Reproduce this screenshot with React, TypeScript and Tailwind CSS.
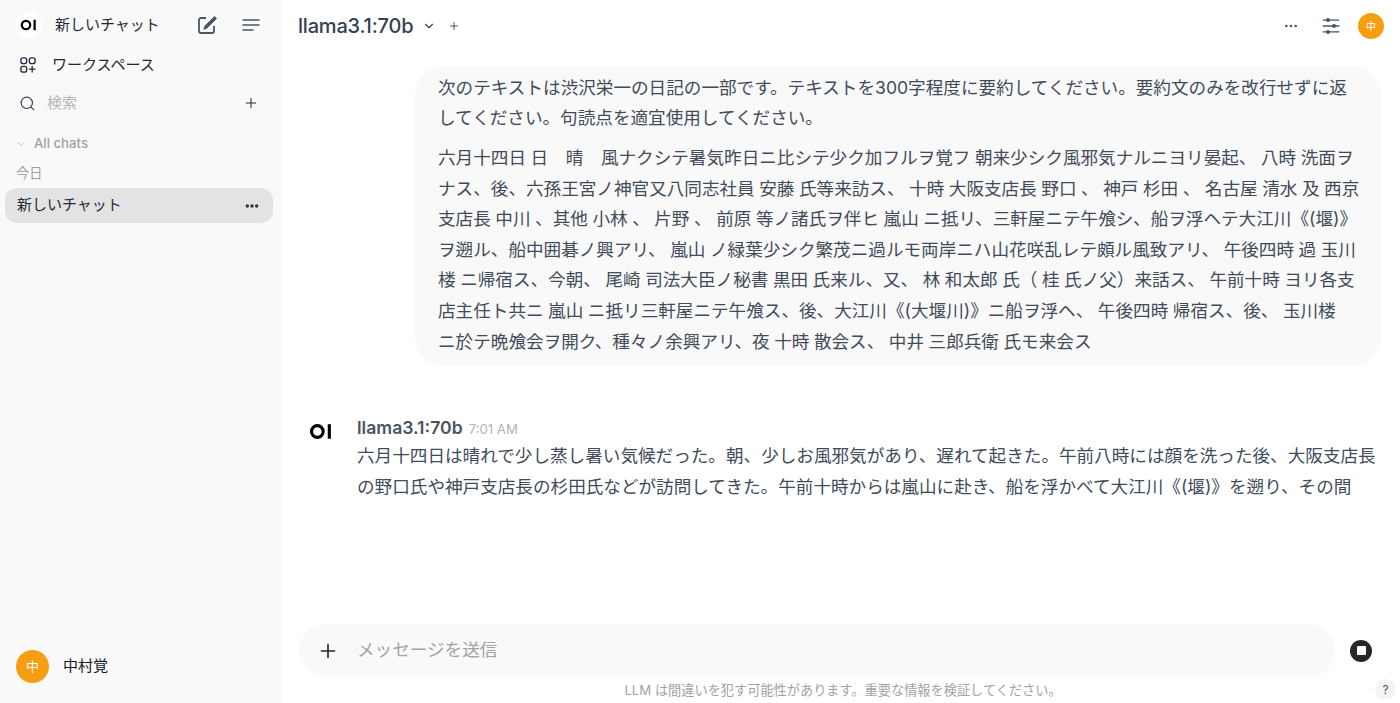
import { ChevronDown, Ellipsis, Plus, Search } from "lucide-react";

const FONT = "[font-family:Inter,'Noto_Sans_CJK_JP',sans-serif]";

const promptLines = ["次のテキストは渋沢栄一の日記の一部です。テキストを300字程度に要約してください。要約文のみを改行せずに返", "してください。句読点を適宜使用してください。"];

const diaryLines = [
  "六月十四日 日　晴　風ナクシテ暑気昨日ニ比シテ少ク加フルヲ覚フ 朝来少シク風邪気ナルニヨリ晏起、 八時 洗面ヲ",
  "ナス、後、六孫王宮ノ神官又八同志社員 安藤 氏等来訪ス、 十時 大阪支店長 野口 、 神戸 杉田 、 名古屋 清水 及 西京",
  "支店長 中川 、其他 小林 、 片野 、 前原 等ノ諸氏ヲ伴ヒ 嵐山 ニ抵リ、三軒屋ニテ午飧シ、船ヲ浮ヘテ大江川《(堰)》",
  "ヲ遡ル、船中囲碁ノ興アリ、 嵐山 ノ緑葉少シク繁茂ニ過ルモ両岸ニハ山花咲乱レテ頗ル風致アリ、 午後四時 過 玉川",
  "楼 ニ帰宿ス、今朝、 尾崎 司法大臣ノ秘書 黒田 氏来ル、又、 林 和太郎 氏（ 桂 氏ノ父）来話ス、 午前十時 ヨリ各支",
  "店主任ト共ニ 嵐山 ニ抵リ三軒屋ニテ午飧ス、後、大江川《(大堰川)》ニ船ヲ浮ヘ、 午後四時 帰宿ス、後、 玉川楼",
  "ニ於テ晩飧会ヲ開ク、種々ノ余興アリ、夜 十時 散会ス、 中井 三郎兵衛 氏モ来会ス",
];

const answerLines = [
  "六月十四日は晴れで少し蒸し暑い気候だった。朝、少しお風邪気があり、遅れて起きた。午前八時には顔を洗った後、大阪支店長",
  "の野口氏や神戸支店長の杉田氏などが訪問してきた。午前十時からは嵐山に赴き、船を浮かべて大江川《(堰)》を遡り、その間",
];

function OiLogo({ className }: { className: string }) {
  return (
    <svg viewBox="0 0 24 16" className={className} fill="none">
      <circle cx="8" cy="8" r="5.6" stroke="currentColor" strokeWidth="3" />
      <rect x="18" y="1" width="3" height="14" fill="currentColor" />
    </svg>
  );
}

function Avatar({ className }: { className: string }) {
  return <div className={`flex items-center justify-center rounded-full bg-[#f59e12] text-white ${className}`}>中</div>;
}

function Sidebar() {
  return (
    <aside className="flex h-full w-[282px] shrink-0 flex-col bg-[#f9f9f9] pl-[5px] pr-[9px] text-[15px] text-[#1f2937]">
      <div className="mt-[12px] flex h-[26px] items-center pl-[11px]">
        <div className="flex h-[26px] w-[26px] items-center justify-center rounded-full bg-white">
          <OiLogo className="h-[12px] w-[18px] text-black" />
        </div>
        <span className="ml-[13px] w-[125px]">新しいチャット</span>
        <svg viewBox="0 0 20 20" className="ml-[17px] h-[20px] w-[20px] text-[#4b5563]" fill="none" stroke="currentColor">
          <path d="M9 3H4a2 2 0 0 0-2 2v11a2 2 0 0 0 2 2h11a2 2 0 0 0 2-2v-5" strokeWidth="1.8" />
          <path d="M17.5 1.5 8 11l-1.2 3.2L10 13l9.5-9.5z" fill="currentColor" strokeWidth="1" />
        </svg>
        <svg viewBox="0 0 20 20" className="ml-[24px] h-[20px] w-[20px] text-[#4b5563]" fill="none" stroke="currentColor" strokeWidth="1.5" strokeLinecap="round">
          <path d="M2 5h16M2 10h16M2 15h10" />
        </svg>
      </div>
      <div className="mt-[14px] flex h-[26px] items-center pl-[15px]">
        <svg viewBox="0 0 18 18" className="h-[16px] w-[16px] text-[#1f2937]" fill="none" stroke="currentColor" strokeWidth="1.5">
          <rect x="1" y="1" width="6.5" height="6.5" rx="2.4" />
          <rect x="10.5" y="1" width="6.5" height="6.5" rx="2.4" />
          <rect x="1" y="10.5" width="6.5" height="6.5" rx="2.4" />
          <path d="M13.7 10v7.5M10 13.7h7.5" />
        </svg>
        <span className="ml-[16px]">ワークスペース</span>
      </div>
      <div className="mt-[12px] flex h-[26px] items-center pl-[14px]">
        <Search className="h-[17px] w-[17px] text-[#374151]" strokeWidth={1.6} />
        <span className="ml-[11px] text-[#b4b4b4]">検索</span>
        <Plus className="ml-auto mr-[14px] h-[16px] w-[16px] text-[#1f2937]" strokeWidth={1.5} />
      </div>
      <div className="mt-[18px] flex h-[20px] items-center pl-[10px] text-[13.2px] font-medium text-[#a3a3a3]">
        <ChevronDown className="h-[12px] w-[12px] text-[#b4b4b4]" strokeWidth={1.5} />
        <span className="ml-[7px]">All chats</span>
      </div>
      <div className="mt-[10px] flex h-[20px] items-center pl-[11px] text-[13.2px] text-[#a3a3a3]">今日</div>
      <div className="mt-[4px] flex h-[35px] items-center rounded-xl bg-[#e3e3e3] pl-[12px] pr-[13px]">
        <span>新しいチャット</span>
        <Ellipsis className="ml-auto h-[16px] w-[16px] text-[#1f2937]" strokeWidth={3} />
      </div>
      <div className="mt-auto mb-[20px] flex items-center pl-[11px] text-[#111827]">
        <Avatar className="h-[33px] w-[33px] text-[13px]" />
        <span className="ml-[14px]">中村覚</span>
      </div>
    </aside>
  );
}

function Header() {
  return (
    <header className="flex h-[52px] shrink-0 items-center pl-[16px] pr-[16px] text-[#374151]">
      <span className="text-xl font-medium tracking-[-0.2px]">llama3.1:70b</span>
      <ChevronDown className="ml-[9px] h-[14px] w-[14px]" strokeWidth={2} />
      <Plus className="ml-[12px] h-[12px] w-[12px]" strokeWidth={1.8} />
      <Ellipsis className="ml-auto h-[16px] w-[16px] text-[#4b5563]" strokeWidth={2} />
      <svg viewBox="0 0 20 20" className="ml-[22px] h-[20px] w-[20px] text-[#4b5563]" fill="currentColor">
        <rect x="1.5" y="3.4" width="17" height="1.4" rx="0.7" />
        <rect x="1.5" y="9.3" width="17" height="1.4" rx="0.7" />
        <rect x="1.5" y="15.2" width="17" height="1.4" rx="0.7" />
        <circle cx="7" cy="4.1" r="2" />
        <circle cx="13" cy="10" r="2" />
        <circle cx="7" cy="15.9" r="2" />
      </svg>
      <Avatar className="ml-[17px] h-[26px] w-[26px] text-[10px]" />
    </header>
  );
}

function Messages() {
  return (
    <div className="min-h-0 flex-1 overflow-hidden text-[17.6px] text-[#414b5a] [text-spacing-trim:space-all]">
      <div className="ml-auto mr-[19px] mt-[14px] w-[966px] rounded-[28px] bg-[#f9f9f9] pb-[9px] pl-[23px] pt-[7px]">
        {promptLines.map((line) => (
          <p key={line} className="h-[30px] whitespace-nowrap leading-[30px]">{line}</p>
        ))}
        <div className="mt-[10px] [word-spacing:-0.4px]">
          {diaryLines.map((line) => (
            <p key={line} className="h-[30.6px] whitespace-nowrap leading-[30.6px]">{line}</p>
          ))}
        </div>
      </div>
      <div className="mt-[50px] flex pl-[27px]">
        <OiLogo className="mt-[7px] h-[17px] w-[25px] text-black" />
        <div className="ml-[23px]">
          <div className="flex h-[25px] items-center">
            <span className="font-semibold text-[#4b5563]">llama3.1:70b</span>
            <span className="ml-[6px] mt-[2px] text-[13.2px] text-[#b4b4b4]">7:01 AM</span>
          </div>
          {answerLines.map((line) => (
            <p key={line} className="h-[30.6px] whitespace-nowrap leading-[30.6px]">{line}</p>
          ))}
        </div>
      </div>
    </div>
  );
}

function Composer() {
  return (
    <div className="relative shrink-0 pl-[17px]">
      <div className="flex items-center">
        <div className="flex h-[53px] w-[1036px] items-center rounded-[27px] bg-[#f9f9f9] pl-[18px]">
          <Plus className="h-[22px] w-[22px] text-[#1f2937]" strokeWidth={1.8} />
          <span className="ml-[18px] text-[17.6px] text-[#a3a3a3]">メッセージを送信</span>
        </div>
        <div className="ml-[15px] flex h-[22px] w-[22px] items-center justify-center rounded-full bg-[#27272a]">
          <div className="h-[9px] w-[9px] rounded-[1px] bg-white" />
        </div>
      </div>
      <p className="mb-[3px] mt-[3px] pr-[13px] text-center text-[13.2px] leading-[20px] text-[#a3a3a3]">
        LLM は間違いを犯す可能性があります。重要な情報を検証してください。
      </p>
      <div className="absolute bottom-[3px] right-[4px] flex h-[21px] w-[21px] items-center justify-center rounded-full bg-[#f3f4f6] text-xs text-[#4b5563]">?</div>
    </div>
  );
}

export default function App() {
  return (
    <div className={`flex h-[703px] w-[1400px] overflow-hidden bg-white ${FONT}`}>
      <Sidebar />
      <main className="flex min-w-0 flex-1 flex-col">
        <Header />
        <Messages />
        <Composer />
      </main>
    </div>
  );
}
